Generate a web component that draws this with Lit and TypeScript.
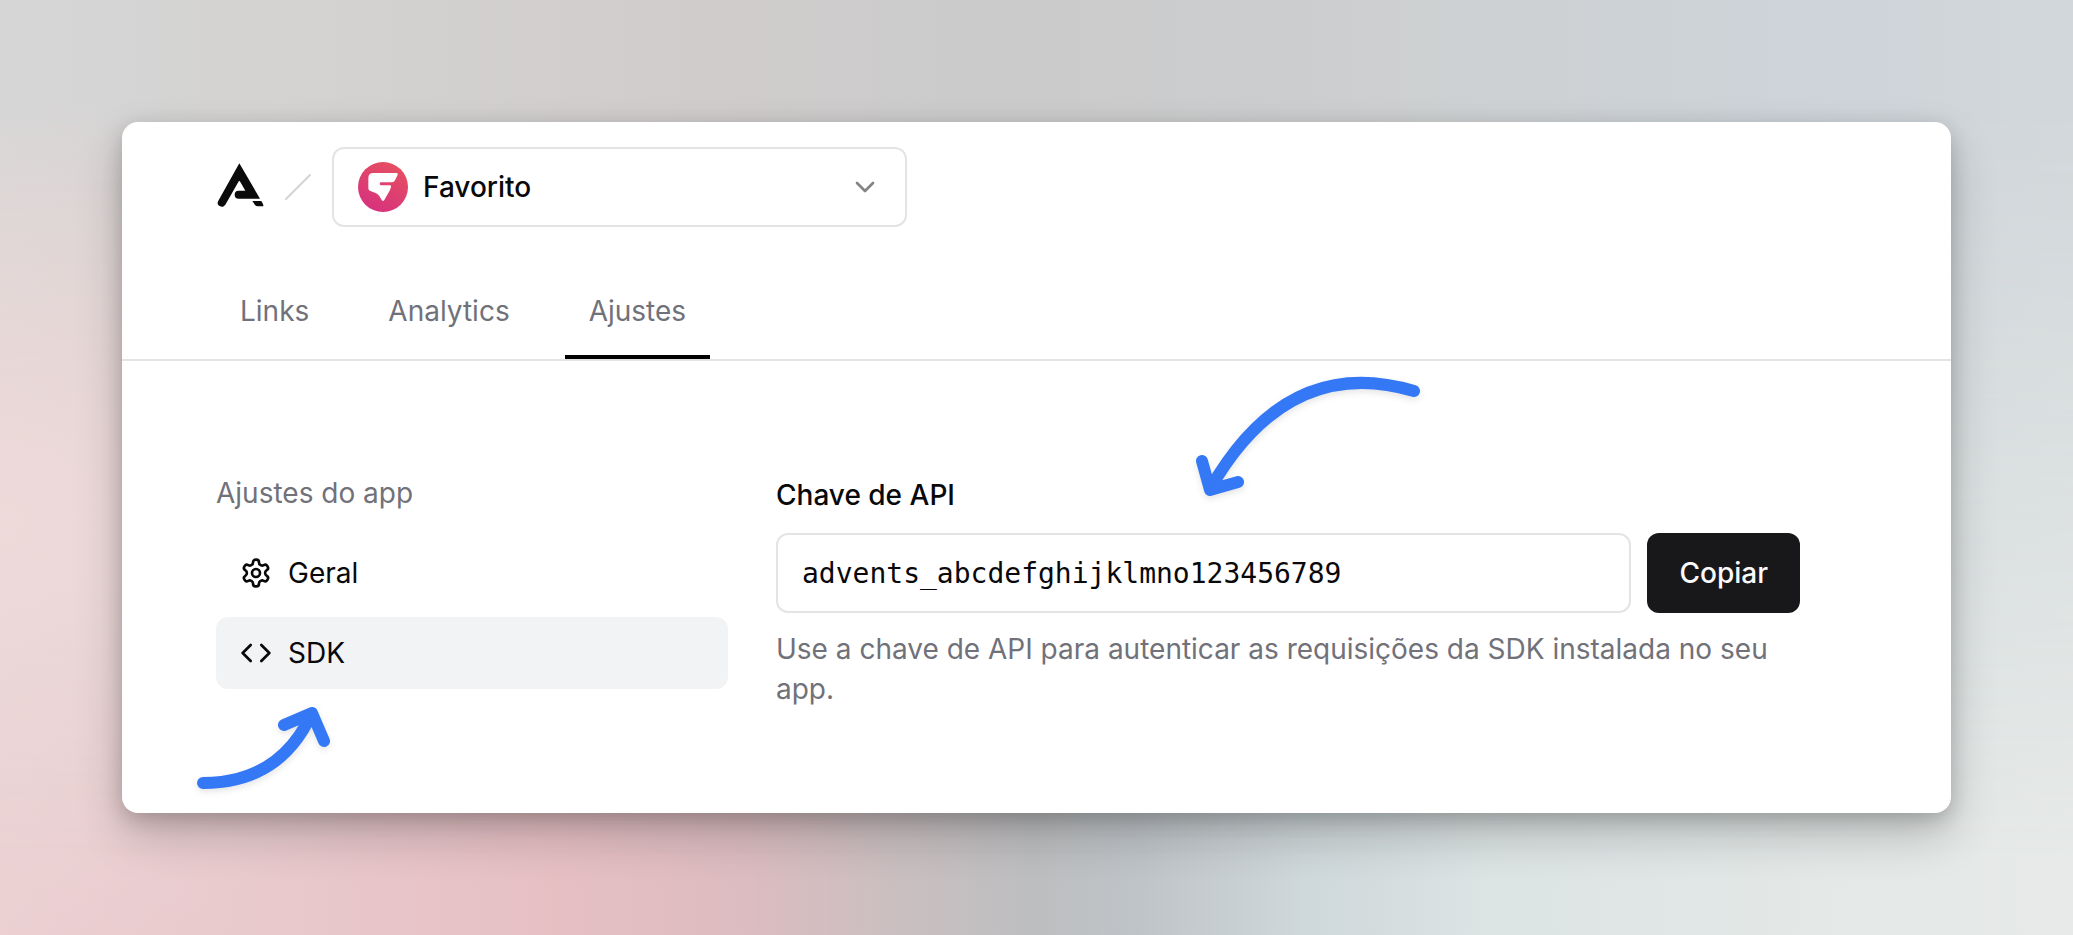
import { LitElement, html, css, svg } from "lit";
import { customElement, state } from "lit/decorators.js";
import { classMap } from "lit/directives/class-map.js";

const gearIcon = svg`
  <path d="M12.22 2h-.44a2 2 0 0 0-2 2v.18a2 2 0 0 1-1 1.73l-.43.25a2 2 0 0 1-2 0l-.15-.08a2 2 0 0 0-2.73.73l-.22.38a2 2 0 0 0 .73 2.73l.15.1a2 2 0 0 1 1 1.72v.51a2 2 0 0 1-1 1.74l-.15.09a2 2 0 0 0-.73 2.73l.22.38a2 2 0 0 0 2.73.73l.15-.08a2 2 0 0 1 2 0l.43.25a2 2 0 0 1 1 1.73V20a2 2 0 0 0 2 2h.44a2 2 0 0 0 2-2v-.18a2 2 0 0 1 1-1.73l.43-.25a2 2 0 0 1 2 0l.15.08a2 2 0 0 0 2.73-.73l.22-.39a2 2 0 0 0-.73-2.73l-.15-.08a2 2 0 0 1-1-1.74v-.5a2 2 0 0 1 1-1.74l.15-.09a2 2 0 0 0 .73-2.73l-.22-.38a2 2 0 0 0-2.73-.73l-.15.08a2 2 0 0 1-2 0l-.43-.25a2 2 0 0 1-1-1.73V4a2 2 0 0 0-2-2z"/>
  <circle cx="12" cy="12" r="3"/>`;

const codeIcon = svg`<path d="m16 18 6-6-6-6M8 6l-6 6 6 6"/>`;

const tabs = ["Links", "Analytics", "Ajustes"];
const sections = [
  { id: "geral", label: "Geral", icon: gearIcon },
  { id: "sdk", label: "SDK", icon: codeIcon },
];

@customElement("app-root")
export class AppRoot extends LitElement {
  @state() private tab = "Ajustes";
  @state() private section = "sdk";

  static styles = css`
    :host {
      display: block;
      position: relative;
      box-sizing: border-box;
      min-height: 100vh;
      padding: 122px;
      font: 400 28px/40px Inter, "Liberation Sans", sans-serif;
      color: #09090b;
      background: linear-gradient(90deg,
        #ebcfd1 0%, #e8c8cb 15%, #e6bfc3 27%, #dcbcc0 36%, #c8bfc0 44%,
        #bdbec0 50%, #bfc4c8 55%, #cfd8da 63%, #dce4e4 72%, #e4e8e7 88%, #e7eae8 100%);
    }
    /* Cool grey band that fades down into the pink and mint one. */
    :host::before {
      content: "";
      position: absolute;
      inset: 0;
      background: linear-gradient(90deg,
        #d6d6d6 0%, #d3d1d0 20%, #cfcccb 35%, #cbcbcc 50%,
        #cccdce 62%, #ced1d3 72%, #cdd3d8 85%, #d1d7da 100%);
      mask-image: linear-gradient(#000 12%, transparent 92%);
    }
    :host::after {
      content: "";
      position: absolute;
      inset: 0;
      background: radial-gradient(ellipse 24% 46% at 0 56%, #eedad9 0%, #eedad900 100%);
    }
    * { box-sizing: border-box; }
    a { color: inherit; text-decoration: none; }
    svg { display: block; }
    .card {
      position: relative;
      z-index: 1;
      background: #fff;
      border-radius: 16px;
      padding: 25px 0 104px;
      box-shadow: 0 22px 48px rgba(0, 0, 0, 0.2), 0 6px 20px rgba(0, 0, 0, 0.18);
    }
    .top, .tabs, .body { padding-left: 94px; padding-right: 151px; }
    .top { display: flex; align-items: center; gap: 18px; margin-bottom: 40px; }
    .logo { width: 48px; height: 48px; fill: #0b0b0c; }
    .slash { width: 32px; height: 32px; fill: none; stroke: #d4d4d8; stroke-width: 2; stroke-linecap: round; }
    .picker { display: grid; grid-template-columns: 575px; align-items: center; }
    .picker > * { grid-area: 1 / 1; }
    .picker select {
      appearance: none;
      width: 100%;
      height: 80px;
      padding: 0 64px 0 89px;
      border: 2px solid #e4e4e7;
      border-radius: 12px;
      background: #fff;
      color: inherit;
      font: inherit;
      font-weight: 500;
    }
    .avatar, .chevron { z-index: 1; pointer-events: none; }
    .avatar { width: 50px; height: 50px; margin-left: 26px; }
    .chevron {
      width: 32px;
      height: 32px;
      justify-self: end;
      margin-right: 26px;
      stroke: #848484;
    }
    .line-icon {
      fill: none;
      stroke-width: 2;
      stroke-linecap: round;
      stroke-linejoin: round;
    }
    .tabs {
      display: flex;
      gap: 31px;
      border-bottom: 2px solid #e4e4e7;
      color: #71717a;
    }
    .tab { padding: 24px; border-bottom: 4px solid transparent; }
    .tab.active { border-color: #000; }
    .body {
      display: grid;
      grid-template-columns: minmax(0, 1fr) minmax(0, 2fr);
      gap: 48px;
      padding-top: 112px;
    }
    .side-title { margin: 0 0 24px; font: inherit; color: #71717a; }
    .side-list { list-style: none; margin: 0; padding: 0; display: grid; gap: 8px; }
    .side-item { position: relative; }
    .side-link {
      display: flex;
      align-items: center;
      gap: 16px;
      padding: 16px 24px;
      border-radius: 12px;
    }
    .side-link.active { background: #f2f3f5; }
    .side-link svg { width: 32px; height: 32px; stroke: #09090b; }
    .panel { position: relative; }
    .label { display: block; margin-bottom: 16px; font-weight: 500; line-height: 44px; }
    .row { display: flex; gap: 16px; }
    .key {
      flex: 1;
      min-width: 0;
      height: 80px;
      padding: 0 24px;
      border: 2px solid #e4e4e7;
      border-radius: 12px;
      background: #fff;
      color: inherit;
      font: 28px "DejaVu Sans Mono", monospace;
    }
    .copy {
      height: 80px;
      padding: 0 32px;
      border: 0;
      border-radius: 12px;
      background: #18181b;
      color: #fafafa;
      font: inherit;
      font-weight: 500;
    }
    .hint { margin: 16px 0 0; color: #71717a; }
    .arrow {
      position: absolute;
      fill: none;
      stroke: #3478f6;
      stroke-width: 12;
      stroke-linecap: round;
      stroke-linejoin: round;
      filter: drop-shadow(0 3px 3px rgba(0, 0, 0, 0.1));
      pointer-events: none;
      overflow: visible;
    }
    .arrow-key { width: 240px; height: 120px; left: 420px; top: -96px; }
    .arrow-sdk { width: 140px; height: 90px; left: -20px; top: 88px; }
  `;

  render() {
    return html`
      <main class="card">
        <header class="top">
          <a href="#" aria-label="Início">
            <svg class="logo" viewBox="48 39 144 144">
              <path d="M118 40 180 146H116a12 12 0 0 1 0-24h20L121 96q-3-6-6 0L76 164c-4 6-11 8-17 4-6-3-8-9-4-16Z"/>
              <path d="M157 153h25q3 0 4 3l4 9q1 4-3 4h-13q-6 0-9-4Z"/>
            </svg>
          </a>
          <svg class="slash" viewBox="0 0 32 32"><path d="M28 4 4 28"/></svg>
          <div class="picker">
            <select aria-label="Aplicativo">
              <option>Favorito</option>
            </select>
            <svg class="avatar" viewBox="742 157 150 150">
              <defs>
                <linearGradient id="pink" x1="0.75" y1="0" x2="0.25" y2="1">
                  <stop offset="0" stop-color="#e65060"/>
                  <stop offset="1" stop-color="#d6317f"/>
                </linearGradient>
              </defs>
              <circle cx="817" cy="232" r="75" fill="url(#pink)"/>
              <path fill="#fff" d="M788 190h70q5 0 3 5l-8 17q-3 6-9 6h-33q-4 0-4 4t4 5h27q5 0 3 5l-3 9-17 30q-4 6-8 0l-7-12q-5-8-13-10l-14-5q-6-2-6-8v-31q0-15 15-15Z"/>
            </svg>
            <svg class="chevron line-icon" viewBox="0 0 24 24"><path d="m6 9 6 6 6-6"/></svg>
          </div>
        </header>

        <nav class="tabs">
          ${tabs.map(
            (t) => html`<a
              href="#"
              class=${classMap({ tab: true, active: t === this.tab })}
              @click=${(e: Event) => { e.preventDefault(); this.tab = t; }}
            >${t}</a>`
          )}
        </nav>

        <div class="body">
          <aside>
            <h2 class="side-title">Ajustes do app</h2>
            <ul class="side-list">
              ${sections.map(
                (s) => html`<li class="side-item">
                  <a
                    href="#"
                    class=${classMap({ "side-link": true, active: s.id === this.section })}
                    @click=${(e: Event) => { e.preventDefault(); this.section = s.id; }}
                  ><svg class="line-icon" viewBox="0 0 24 24">${s.icon}</svg>${s.label}</a>
                  ${s.id === "sdk"
                    ? html`<svg class="arrow arrow-sdk" viewBox="0 0 140 90">
                        <path d="M7 78Q84 78 116 8M88 20 116 8 128 36"/>
                      </svg>`
                    : ""}
                </li>`
              )}
            </ul>
          </aside>

          <section class="panel">
            <label class="label" for="api-key">Chave de API</label>
            <div class="row">
              <input class="key" id="api-key" readonly value="advents_abcdefghijklmno123456789">
              <button class="copy" type="button">Copiar</button>
            </div>
            <p class="hint">
              Use a chave de API para autenticar as requisições da SDK instalada no seu app.
            </p>
            <svg class="arrow arrow-key" viewBox="0 0 240 120">
              <path d="M218 14C134-11 66 21 14 112M6 84 14 113 42 105"/>
            </svg>
          </section>
        </div>
      </main>
    `;
  }
}
